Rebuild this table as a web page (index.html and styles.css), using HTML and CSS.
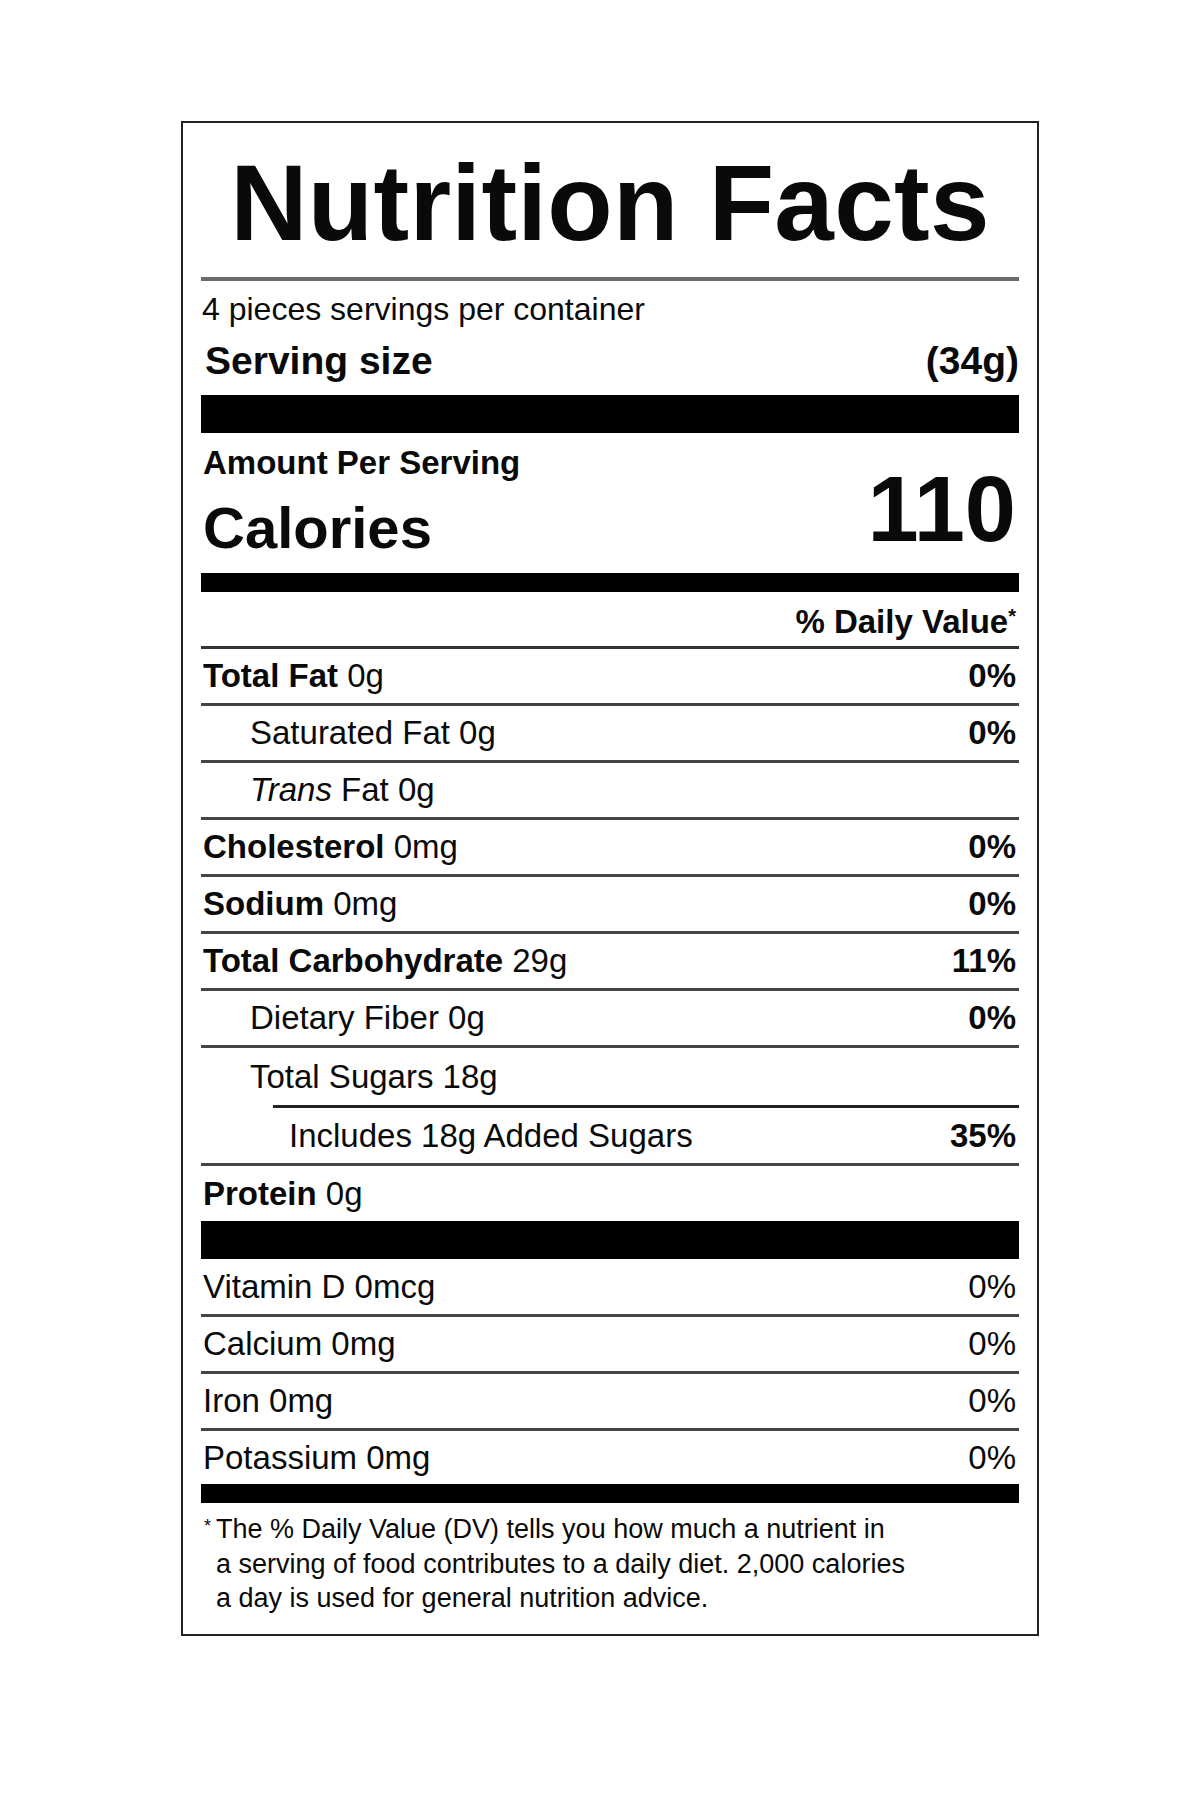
FILE: index.html
```html
<!DOCTYPE html>
<html>
<head>
<meta charset="utf-8">
<title>Nutrition Facts</title>
<link rel="stylesheet" href="styles.css">
</head>
<body>
<div class="label">
  <h1 class="title">Nutrition Facts</h1>
  <div class="rule-gray"></div>
  <div class="servings">4 pieces servings per container</div>
  <div class="serving-size"><span>Serving size</span><span>(34g)</span></div>
  <div class="bar-thick"></div>
  <div class="amount">Amount Per Serving</div>
  <div class="calories"><span class="cal-label">Calories</span><span class="cal-value">110</span></div>
  <div class="bar-thin"></div>
  <div class="dv-head">% Daily Value<span class="ast">*</span></div>

  <div class="row"><span><b>Total Fat</b> 0g</span><b>0%</b></div>
  <div class="row sub"><span>Saturated Fat 0g</span><b>0%</b></div>
  <div class="row sub"><span><i>Trans</i> Fat 0g</span></div>
  <div class="row"><span><b>Cholesterol</b> 0mg</span><b>0%</b></div>
  <div class="row"><span><b>Sodium</b> 0mg</span><b>0%</b></div>
  <div class="row"><span><b>Total Carbohydrate</b> 29g</span><b>11%</b></div>
  <div class="row sub"><span>Dietary Fiber 0g</span><b>0%</b></div>
  <div class="row sub sugars"><span>Total Sugars 18g</span></div>
  <div class="added-rule"></div>
  <div class="row added"><span>Includes 18g Added Sugars</span><b>35%</b></div>
  <div class="row protein"><span><b>Protein</b> 0g</span></div>
  <div class="bar-thick bar-mid"></div>

  <div class="row vit vit-first"><span>Vitamin D 0mcg</span><span>0%</span></div>
  <div class="row vit"><span>Calcium 0mg</span><span>0%</span></div>
  <div class="row vit"><span>Iron 0mg</span><span>0%</span></div>
  <div class="row vit vit-last"><span>Potassium 0mg</span><span>0%</span></div>
  <div class="bar-thin bar-bottom"></div>

  <p class="footnote"><span class="fn-ast">*</span>The % Daily Value (DV) tells you how much a nutrient in<br>a serving of food contributes to a daily diet. 2,000 calories<br>a day is used for general nutrition advice.</p>
</div>
</body>
</html>
```
FILE: styles.css
```css
html, body {
  margin: 0;
  padding: 0;
  background: #fff;
}

.label {
  width: 858px;
  box-sizing: border-box;
  margin: 121px 0 0 181px;
  border: 2px solid #222;
  padding: 27px 18px 18px;
  font-family: "Liberation Sans", Arial, sans-serif;
  color: #0a0a0a;
}

.title {
  margin: 0;
  font-size: 107px;
  line-height: 107px;
  font-weight: bold;
  text-align: center;
  letter-spacing: 0.3px;
}

.rule-gray {
  height: 4px;
  background: #6b6b6b;
  margin-top: 20px;
}

.servings {
  font-size: 32px;
  line-height: 40px;
  margin-top: 8px;
  padding-left: 1px;
}

.serving-size {
  display: flex;
  justify-content: space-between;
  font-size: 39px;
  font-weight: bold;
  line-height: 48px;
  margin-top: 8px;
  padding-left: 4px;
}

.bar-thick {
  height: 38px;
  background: #000;
  margin-top: 10px;
}

.bar-mid {
  margin-top: 0;
}

.amount {
  font-size: 33px;
  font-weight: bold;
  line-height: 40px;
  margin-top: 10px;
  padding-left: 2px;
}

.calories {
  display: flex;
  justify-content: space-between;
  align-items: flex-start;
  margin-top: 13px;
  font-weight: bold;
}

.cal-label {
  font-size: 58px;
  line-height: 64px;
  padding-left: 2px;
}

.cal-value {
  font-size: 92px;
  line-height: 26px;
  margin-right: 3px;
}

.bar-thin {
  height: 19px;
  background: #000;
  margin-top: 13px;
}

.dv-head {
  text-align: right;
  font-size: 33px;
  font-weight: bold;
  line-height: 48px;
  border-bottom: 3px solid #333;
  padding-right: 3px;
}

.ast {
  font-size: 20px;
  vertical-align: 10px;
}

.row {
  display: flex;
  justify-content: space-between;
  font-size: 33px;
  line-height: 54px;
  border-bottom: 3px solid #444;
  padding-right: 3px;
  padding-left: 2px;
}

.sub {
  padding-left: 49px;
}

.sugars {
  border-bottom: none;
  line-height: 57px;
}

.added-rule {
  height: 3px;
  background: #222;
  margin-left: 72px;
}

.added {
  padding-left: 88px;
  line-height: 55px;
}

.protein {
  border-bottom: none;
  line-height: 55px;
}

.vit-first {
  line-height: 55px;
}

.vit-last {
  border-bottom: none;
  line-height: 53px;
}

.bar-bottom {
  margin-top: 0;
}

.footnote {
  margin: 9px 0 0;
  font-size: 27px;
  line-height: 34.5px;
  padding-left: 15px;
  position: relative;
}

.fn-ast {
  position: absolute;
  left: 3px;
  top: -3px;
  font-size: 18px;
}
```
